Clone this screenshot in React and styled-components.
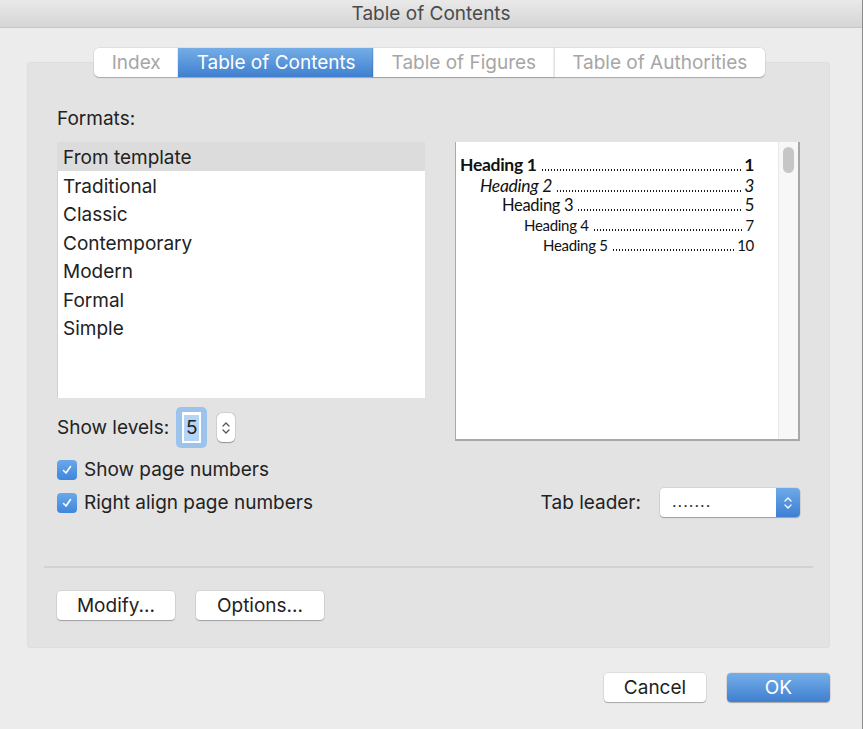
import React from "react";
import styled, { createGlobalStyle } from "styled-components";

const FORMATS = [
  "From template",
  "Traditional",
  "Classic",
  "Contemporary",
  "Modern",
  "Formal",
  "Simple",
];

const TABS = ["Index", "Table of Contents", "Table of Figures", "Table of Authorities"];

const PREVIEW = [
  { label: "Heading 1", page: "1", indent: 0, size: 17.5, weight: 700, italic: false },
  { label: "Heading 2", page: "3", indent: 20, size: 17.5, weight: 400, italic: true },
  { label: "Heading 3", page: "5", indent: 42, size: 16.5, weight: 400, italic: false },
  { label: "Heading 4", page: "7", indent: 64, size: 15, weight: 400, italic: false },
  { label: "Heading 5", page: "10", indent: 83, size: 15, weight: 400, italic: false },
];

const Check = () => (
  <svg width="12" height="12" viewBox="0 0 12 12">
    <path d="M2.5 6.5 L5 9 L9.5 2.5" fill="none" stroke="#fff" strokeWidth="1.6" strokeLinecap="round" strokeLinejoin="round" />
  </svg>
);

const UpDown = ({ color = "#555", w = 8, h = 16 }) => (
  <svg width={w} height={h} viewBox="0 0 8 16">
    <path d="M1 6 L4 3 L7 6" fill="none" stroke={color} strokeWidth="1.3" strokeLinecap="round" strokeLinejoin="round" />
    <path d="M1 10 L4 13 L7 10" fill="none" stroke={color} strokeWidth="1.3" strokeLinecap="round" strokeLinejoin="round" />
  </svg>
);

const App = () => {
  return (
    <Window>
      <GlobalStyle />
      <TitleBar>Table of Contents</TitleBar>
      <Body>
        <TabRow>
          {TABS.map((t) => (
            <Tab key={t} $active={t === "Table of Contents"}>
              {t}
            </Tab>
          ))}
        </TabRow>
        <Group>
          <Grid>
            <Label>Formats:</Label>
            <div />
            <List>
              {FORMATS.map((f, i) => (
                <ListItem key={f} $selected={i === 0}>
                  {f}
                </ListItem>
              ))}
            </List>
            <Preview>
              <PreviewLines>
                {PREVIEW.map((p) => (
                  <Entry
                    key={p.label}
                    $indent={p.indent}
                    $size={p.size}
                    $weight={p.weight}
                    $italic={p.italic}
                  >
                    <span>{p.label}</span>
                    <Leader />
                    <span>{p.page}</span>
                  </Entry>
                ))}
              </PreviewLines>
              <ScrollTrack>
                <ScrollThumb />
              </ScrollTrack>
            </Preview>
            <LevelsRow>
              <Label>Show levels:</Label>
              <FocusRing>
                <Field>
                  <Selected>5</Selected>
                </Field>
              </FocusRing>
              <Stepper>
                <UpDown w={8} h={18} />
              </Stepper>
            </LevelsRow>
            <CheckRow $top={9}>
              <CheckBox>
                <Check />
              </CheckBox>
              <Label>Show page numbers</Label>
            </CheckRow>
            <div />
            <CheckRow $top={12}>
              <CheckBox>
                <Check />
              </CheckBox>
              <Label>Right align page numbers</Label>
            </CheckRow>
            <LeaderRow>
              <Label>Tab leader:</Label>
              <Select>
                <SelectValue>.......</SelectValue>
                <SelectArrows>
                  <UpDown color="#fff" w={8} h={18} />
                </SelectArrows>
              </Select>
            </LeaderRow>
          </Grid>
          <Separator />
          <ButtonRow>
            <Button $w={118}>Modify...</Button>
            <Button $w={128}>Options...</Button>
          </ButtonRow>
        </Group>
        <Footer>
          <Button $w={102}>Cancel</Button>
          <Button $w={103} $primary>
            OK
          </Button>
        </Footer>
      </Body>
    </Window>
  );
};

export default App;

const GlobalStyle = createGlobalStyle`
  html, body {
    margin: 0;
    padding: 0;
    background: #ececec;
  }
  * {
    box-sizing: border-box;
  }
`;

const Window = styled.div`
  width: 863px;
  height: 729px;
  background: #ececec;
  border-right: 1px solid #8c8c8c;
  font-family: "Inter", "Liberation Sans", sans-serif;
  color: #222;
  overflow: hidden;
`;

const TitleBar = styled.div`
  height: 28px;
  background: linear-gradient(#e9e9e9, #d5d5d5);
  border-bottom: 1px solid #c6c6c6;
  display: flex;
  align-items: center;
  justify-content: center;
  font-size: 19px;
  color: #4a4a4a;
`;

const Body = styled.div`
  padding: 20px 0 0 27px;
  width: 830px;
`;

const TabRow = styled.div`
  display: flex;
  justify-content: center;
  position: relative;
  z-index: 1;
  padding-left: 2px;
`;

const Tab = styled.div`
  height: 29px;
  display: flex;
  align-items: center;
  padding: 0 17.5px;
  font-size: 19px;
  color: ${(p) => (p.$active ? "#fff" : "#a6a6a6")};
  background: ${(p) => (p.$active ? "linear-gradient(#74ade6, #3f7fd0)" : "#fff")};
  box-shadow: 0 1px 1px rgba(0, 0, 0, 0.22), 0 0 0 0.5px rgba(0, 0, 0, 0.1);
  border-left: 1px solid ${(p) => (p.$active ? "transparent" : "#e2e2e2")};
  &:first-child {
    border-radius: 5px 0 0 5px;
    border-left: none;
  }
  &:last-child {
    border-radius: 0 5px 5px 0;
  }
`;

const Group = styled.div`
  margin-top: -15px;
  background: #e3e3e3;
  border-radius: 4px;
  height: 586px;
  padding: 47px 0 0 0;
  box-shadow: inset 0 0 0 1px #dedede;
`;

const Grid = styled.div`
  display: grid;
  grid-template-columns: 368px 345px;
  column-gap: 30px;
  padding-left: 30px;
  align-items: center;
`;

const Label = styled.div`
  font-size: 19px;
  line-height: 20px;
  white-space: nowrap;
  color: #222;
`;

const List = styled.div`
  height: 256px;
  background: #fff;
  margin-top: 13px;
  box-shadow: inset 1px 1px 0 #d0d0d0;
  align-self: start;
`;

const ListItem = styled.div`
  height: 28.5px;
  line-height: 28.5px;
  padding: 2px 0 0 6px;
  font-size: 19px;
  color: #222;
  background: ${(p) => (p.$selected ? "#dcdcdc" : "transparent")};
`;

const Preview = styled.div`
  grid-row: span 2;
  align-self: start;
  margin-top: 13px;
  height: 299px;
  background: #fff;
  border-left: 1px solid #a8a8a8;
  border-bottom: 2px solid #a8a8a8;
  border-right: 2px solid #a8a8a8;
  display: flex;
  min-width: 0;
`;

const PreviewLines = styled.div`
  flex: 1;
  min-width: 0;
  padding: 12px 24px 0 4px;
  font-family: "Lato", "Noto Sans", sans-serif;
  color: #111;
`;

const Entry = styled.div`
  display: flex;
  align-items: baseline;
  height: 20.5px;
  padding-left: ${(p) => p.$indent}px;
  font-size: ${(p) => p.$size}px;
  font-weight: ${(p) => p.$weight};
  font-style: ${(p) => (p.$italic ? "italic" : "normal")};
  letter-spacing: -0.3px;
  white-space: nowrap;
`;

const Leader = styled.span`
  flex: 1 1 0;
  min-width: 0;
  height: 2px;
  margin: 0 2px 0 4px;
  background-image: radial-gradient(circle, #1a1a1a 0.9px, transparent 1.1px);
  background-size: 3px 2px;
  background-repeat: repeat-x;
`;

const ScrollTrack = styled.div`
  width: 20px;
  flex: none;
  background: #f7f7f7;
  border-left: 1px solid #e8e8e8;
  padding: 5px 0 0 4px;
`;

const ScrollThumb = styled.div`
  width: 11px;
  height: 26px;
  border-radius: 6px;
  background: #c6c6c6;
`;

const LevelsRow = styled.div`
  display: flex;
  align-items: center;
  height: 52px;
  padding-top: 7px;
`;

const FocusRing = styled.div`
  margin-left: 7px;
  width: 31px;
  height: 41px;
  border-radius: 5px;
  background: #9cc3ec;
  padding: 5px 6px;
`;

const Field = styled.div`
  height: 100%;
  background: #fff;
  display: flex;
  align-items: center;
  justify-content: center;
  font-size: 19px;
`;

const Selected = styled.span`
  background: #b5d5f8;
  padding: 2px 2px;
  line-height: 22px;
`;

const Stepper = styled.div`
  margin-left: 10px;
  width: 18px;
  height: 29px;
  border-radius: 5px;
  background: #fff;
  box-shadow: 0 0.5px 1px rgba(0, 0, 0, 0.3), 0 0 0 0.5px rgba(0, 0, 0, 0.12);
  display: flex;
  align-items: center;
  justify-content: center;
`;

const CheckRow = styled.div`
  display: flex;
  align-items: center;
  gap: 7px;
  margin-top: ${(p) => p.$top}px;
  height: 21px;
`;

const CheckBox = styled.div`
  width: 20px;
  height: 20px;
  border-radius: 4px;
  background: linear-gradient(#6aa8ea, #3f86dc);
  display: flex;
  align-items: center;
  justify-content: center;
`;

const LeaderRow = styled.div`
  display: flex;
  align-items: center;
  justify-content: flex-end;
  gap: 19px;
  margin-top: 12px;
  height: 21px;
`;

const Select = styled.div`
  width: 140px;
  height: 29px;
  border-radius: 4px;
  background: #fff;
  box-shadow: 0 1px 1px rgba(0, 0, 0, 0.25), 0 0 0 0.5px rgba(0, 0, 0, 0.12);
  display: flex;
  overflow: hidden;
`;

const SelectValue = styled.div`
  flex: 1;
  padding-left: 12px;
  font-size: 16px;
  line-height: 26px;
  letter-spacing: 1px;
  color: #333;
`;

const SelectArrows = styled.div`
  width: 24px;
  background: linear-gradient(#6ea9e8, #3e7fd2);
  display: flex;
  align-items: center;
  justify-content: center;
`;

const Separator = styled.div`
  margin: 53px 17px 0 17px;
  height: 2px;
  background: #d2d2d2;
`;

const ButtonRow = styled.div`
  display: flex;
  gap: 21px;
  padding: 23px 0 0 30px;
`;

const Button = styled.div`
  width: ${(p) => p.$w}px;
  height: 29px;
  border-radius: 4px;
  display: flex;
  align-items: center;
  justify-content: center;
  font-size: 19px;
  color: ${(p) => (p.$primary ? "#fff" : "#222")};
  background: ${(p) => (p.$primary ? "linear-gradient(#75aee8, #3f7fd0)" : "#fff")};
  box-shadow: 0 1px 1px rgba(0, 0, 0, 0.25), 0 0 0 0.5px rgba(0, 0, 0, 0.12);
`;

const Footer = styled.div`
  display: flex;
  justify-content: flex-end;
  gap: 21px;
  padding-top: 25px;
`;
